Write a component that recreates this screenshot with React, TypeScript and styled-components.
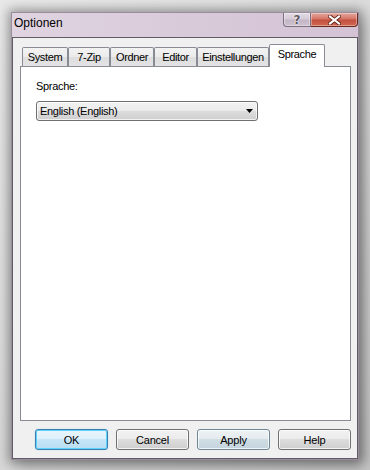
import React from "react";
import styled, { createGlobalStyle } from "styled-components";

const GlobalStyle = createGlobalStyle`
  html, body { margin: 0; padding: 0; }
  body {
    background: #dcdcdc;
    font-family: "Liberation Sans", Arial, sans-serif;
  }
`;

const Page = styled.div`
  width: 370px;
  height: 470px;
  box-sizing: border-box;
  padding: 12px 0 0 11px;
  overflow: hidden;
  background: linear-gradient(135deg, #e8e8e8 0%, #d6d6d6 60%, #c6c6c6 100%);
`;

const Window = styled.div`
  width: 348px;
  height: 448px;
  box-sizing: border-box;
  display: flex;
  flex-direction: column;
  border: 1px solid #9b8c9d;
  background: linear-gradient(to bottom, #d8cad9 0%, #e1d6e2 40%, #e6dde7 100%);
  box-shadow: 0 0 10px 3px rgba(0, 0, 0, 0.3), 5px 6px 14px rgba(0, 0, 0, 0.25);
`;

const TitleBar = styled.div`
  height: 24px;
  flex: none;
  display: flex;
  align-items: flex-start;
  padding-left: 2px;
  background: linear-gradient(to right, #e0d4e1 0%, #d9cada 50%, #d3c3d5 100%);
`;

const Title = styled.div`
  font-size: 12px;
  line-height: 14px;
  padding-top: 3px;
  color: #000;
`;

const CaptionButtons = styled.div`
  margin-left: auto;
  display: flex;
`;

const CaptionButton = styled.div<{ $close?: boolean; $w: number }>`
  width: ${(p) => p.$w}px;
  height: 14px;
  box-sizing: border-box;
  display: flex;
  align-items: center;
  justify-content: center;
  border: 1px solid ${(p) => (p.$close ? "#6a2a22" : "#7d6e80")};
  border-top: none;
  border-radius: ${(p) => (p.$close ? "0 0 4px 0" : "0 0 0 4px")};
  ${(p) => (p.$close ? "border-left: none;" : "")}
  background: ${(p) =>
    p.$close
      ? "linear-gradient(to bottom, #e4a89e 0%, #d47566 45%, #c4503e 55%, #d06a52 100%)"
      : "linear-gradient(to bottom, #e4dbe6 0%, #d6cbd8 45%, #c4b6c7 55%, #cdc1cf 100%)"};
  box-shadow: inset 0 0 0 1px rgba(255, 255, 255, 0.35);
`;

const HelpGlyph = styled.span`
  font-family: "DejaVu Sans", sans-serif;
  font-weight: bold;
  font-size: 12px;
  line-height: 12px;
  margin-top: 1px;
  color: #5f5763;
  text-shadow: 0 0 1px #fff, 0 0 1px #fff, 0 0 1px #fff;
`;

const Client = styled.div`
  flex: 1;
  display: flex;
  flex-direction: column;
  border: 1px solid #615b63;
  background: #f0f0f0;
`;

const TabStrip = styled.div`
  margin: 6px 6px -1px 7px;
  height: 23px;
  display: flex;
  align-items: flex-end;
  padding-left: 2px;
  position: relative;
  z-index: 1;
`;

const Tab = styled.div<{ $w: number; $active?: boolean }>`
  width: ${(p) => p.$w}px;
  height: ${(p) => (p.$active ? 23 : 19)}px;
  margin-bottom: ${(p) => (p.$active ? 0 : 1)}px;
  box-sizing: border-box;
  border: 1px solid #898c95;
  border-bottom: none;
  border-radius: 2px 2px 0 0;
  background: ${(p) =>
    p.$active ? "#ffffff" : "linear-gradient(to bottom, #f3f3f3 0%, #ebebeb 50%, #dedede 51%, #e3e3e3 100%)"};
  font-size: 11px;
  letter-spacing: -0.35px;
  color: #000;
  display: flex;
  justify-content: center;
  align-items: ${(p) => (p.$active ? "flex-start" : "center")};
  padding-top: ${(p) => (p.$active ? 3 : 0)}px;
`;

const Panel = styled.div`
  margin: 0 6px 0 7px;
  height: 355px;
  box-sizing: border-box;
  border: 1px solid #898c95;
  background: #ffffff;
  padding: 13px 15px 0;
  display: flex;
  flex-direction: column;
  align-items: flex-start;
`;

const Label = styled.div`
  font-size: 11px;
  line-height: 13px;
  letter-spacing: -0.3px;
  color: #000;
  margin-bottom: 8px;
`;

const Select = styled.div`
  width: 222px;
  height: 20px;
  box-sizing: border-box;
  border: 1px solid #707070;
  border-radius: 3px;
  background: linear-gradient(to bottom, #f2f2f2 0%, #ebebeb 50%, #dddddd 50%, #cfcfcf 100%);
  box-shadow: inset 0 0 0 1px rgba(255, 255, 255, 0.7);
  display: flex;
  align-items: center;
  padding: 0 4px 0 3px;
  font-size: 11px;
  letter-spacing: -0.3px;
  color: #000;
`;

const SelectText = styled.span`
  flex: 1;
`;

const ButtonRow = styled.div`
  margin-top: 8px;
  padding-left: 22px;
  display: flex;
  gap: 8px;
`;

type Variant = "default" | "normal" | "hover";

const Button = styled.div<{ $variant: Variant }>`
  width: 73px;
  height: 21px;
  box-sizing: border-box;
  border-radius: 3px;
  display: flex;
  align-items: center;
  justify-content: center;
  font-size: 11px;
  letter-spacing: -0.2px;
  color: #000;
  border: 1px solid
    ${(p) => (p.$variant === "default" ? "#3c7fb1" : p.$variant === "hover" ? "#6f8795" : "#707070")};
  background: ${(p) =>
    p.$variant === "default"
      ? "linear-gradient(to bottom, #e9f5fc 0%, #dcf0fb 50%, #c6e6f8 50%, #b9def3 100%)"
      : p.$variant === "hover"
      ? "linear-gradient(to bottom, #eef2f4 0%, #e3eaee 50%, #d0dde4 50%, #c4d4dd 100%)"
      : "linear-gradient(to bottom, #f2f2f2 0%, #ebebeb 50%, #dddddd 50%, #cfcfcf 100%)"};
  box-shadow: ${(p) =>
    p.$variant === "default"
      ? "inset 0 0 0 1px #5fd2fb, 0 0 1px #7fc8ee"
      : "inset 0 0 0 1px rgba(255,255,255,0.75)"};
`;

const tabs = [
  { label: "System", w: 46 },
  { label: "7-Zip", w: 42 },
  { label: "Ordner", w: 44 },
  { label: "Editor", w: 43 },
  { label: "Einstellungen", w: 72 },
  { label: "Sprache", w: 56, active: true },
];

export default function App() {
  return (
    <>
      <GlobalStyle />
      <Page>
        <Window>
          <TitleBar>
            <Title>Optionen</Title>
            <CaptionButtons>
              <CaptionButton $w={28}>
                <HelpGlyph>?</HelpGlyph>
              </CaptionButton>
              <CaptionButton $w={47} $close>
                <svg width="13" height="10" viewBox="0 0 13 10">
                  <path
                    d="M2 1.5 L11 8.5 M11 1.5 L2 8.5"
                    stroke="#5a1c14"
                    strokeWidth="3.8"
                    strokeLinecap="square"
                  />
                  <path
                    d="M2 1.5 L11 8.5 M11 1.5 L2 8.5"
                    stroke="#ffffff"
                    strokeWidth="2.2"
                    strokeLinecap="square"
                  />
                </svg>
              </CaptionButton>
            </CaptionButtons>
          </TitleBar>
          <Client>
            <TabStrip>
              {tabs.map((t) => (
                <Tab key={t.label} $w={t.w} $active={t.active}>
                  {t.label}
                </Tab>
              ))}
            </TabStrip>
            <Panel>
              <Label>Sprache:</Label>
              <Select>
                <SelectText>English (English)</SelectText>
                <svg width="7" height="4" viewBox="0 0 7 4">
                  <path d="M0 0 H7 L3.5 4 Z" fill="#000" />
                </svg>
              </Select>
            </Panel>
            <ButtonRow>
              <Button $variant="default">OK</Button>
              <Button $variant="normal">Cancel</Button>
              <Button $variant="hover">Apply</Button>
              <Button $variant="normal">Help</Button>
            </ButtonRow>
          </Client>
        </Window>
      </Page>
    </>
  );
}
